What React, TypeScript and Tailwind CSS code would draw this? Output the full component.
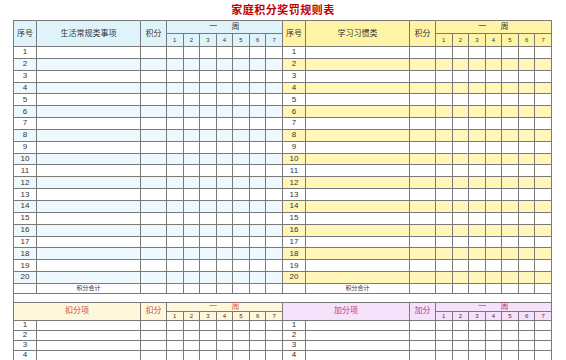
import React from 'react';

const days = [1, 2, 3, 4, 5, 6, 7];
const rows = Array.from({ length: 20 }, (_, i) => i + 1);
const bonusRows = [1, 2, 3, 4];

const cell = 'border border-[#7a7a7a] p-0 text-center align-middle leading-none';

function HalfCols() {
  return (
    <>
      <col className="w-[23px]" />
      <col className="w-[104px]" />
      <col className="w-[26px]" />
      {days.map((d) => (
        <col key={d} className="w-[16.57px]" />
      ))}
    </>
  );
}

export default function App() {
  return (
    <div
      className="w-[566px] h-[360px] overflow-hidden bg-white text-[#333]"
      style={{ fontFamily: '"Liberation Sans", "Noto Sans CJK SC", sans-serif' }}
    >
      {/* Title */}
      <div className="h-[20px] flex items-center justify-center">
        <h1 className="text-[11px] font-bold text-[#c00000] tracking-[0.5px] leading-none">家庭积分奖罚规则表</h1>
      </div>

      <table className="ml-[13px] w-[538px] table-fixed border-collapse">
        <colgroup>
          <HalfCols />
          <HalfCols />
        </colgroup>
        <tbody>
          {/* Top header */}
          <tr className="h-[13px]">
            <td rowSpan={2} className={`${cell} bg-[#dff4fa] text-[8px]`}>序号</td>
            <td rowSpan={2} className={`${cell} bg-[#dff4fa] text-[8px]`}>生活常规类事项</td>
            <td rowSpan={2} className={`${cell} bg-[#dff4fa] text-[8px]`}>积分</td>
            <td colSpan={7} className={`${cell} bg-[#dff4fa] text-[8px] tracking-[6px] pl-[6px]`}>一 周</td>
            <td rowSpan={2} className={`${cell} bg-[#fff3a6] text-[8px]`}>序号</td>
            <td rowSpan={2} className={`${cell} bg-[#fff3a6] text-[8px]`}>学习习惯类</td>
            <td rowSpan={2} className={`${cell} bg-[#fff3a6] text-[8px]`}>积分</td>
            <td colSpan={7} className={`${cell} bg-[#fff3a6] text-[8px] tracking-[6px] pl-[6px]`}>一 周</td>
          </tr>
          <tr className="h-[13px]">
            {days.map((d) => (
              <td key={`l${d}`} className={`${cell} bg-[#dff4fa] text-[6px]`}>{d}</td>
            ))}
            {days.map((d) => (
              <td key={`r${d}`} className={`${cell} bg-[#fff3a6] text-[6px]`}>{d}</td>
            ))}
          </tr>

          {/* 20 rows */}
          {rows.map((n) => {
            const even = n % 2 === 0;
            const l = even ? 'bg-[#eef9fd]' : 'bg-white';
            const r = even ? 'bg-[#fff6b8]' : 'bg-white';
            return (
              <tr key={n} className="h-[11.85px]">
                <td className={`${cell} ${l} text-[8px]`}>{n}</td>
                <td className={`${cell} ${l}`}></td>
                <td className={`${cell} ${l}`}></td>
                {days.map((d) => (
                  <td key={`l${d}`} className={`${cell} ${l}`}></td>
                ))}
                <td className={`${cell} ${r} text-[8px]`}>{n}</td>
                <td className={`${cell} ${r}`}></td>
                <td className={`${cell} ${r}`}></td>
                {days.map((d) => (
                  <td key={`r${d}`} className={`${cell} ${r}`}></td>
                ))}
              </tr>
            );
          })}

          {/* Totals */}
          <tr className="h-[10px]">
            <td className={cell}></td>
            <td className={`${cell} text-[6px]`}>积分合计</td>
            <td className={cell}></td>
            {days.map((d) => (
              <td key={`l${d}`} className={cell}></td>
            ))}
            <td className={cell}></td>
            <td className={`${cell} text-[6px]`}>积分合计</td>
            <td className={cell}></td>
            {days.map((d) => (
              <td key={`r${d}`} className={cell}></td>
            ))}
          </tr>
          <tr className="h-[9px]">
            <td colSpan={20} className={cell}></td>
          </tr>

          {/* Deduction / bonus header */}
          <tr className="h-[9px]">
            <td colSpan={2} rowSpan={2} className={`${cell} bg-[#fff7dc] text-[8px] text-[#c0504d]`}>扣分项</td>
            <td rowSpan={2} className={`${cell} bg-[#fff7dc] text-[8px] text-[#c0504d]`}>扣分</td>
            <td colSpan={7} className={`${cell} bg-[#fff7dc] text-[8px] text-[#d0603a] tracking-[6px] pl-[6px]`}>一 周</td>
            <td colSpan={2} rowSpan={2} className={`${cell} bg-[#f6e1fb] text-[8px] text-[#c0397a]`}>加分项</td>
            <td rowSpan={2} className={`${cell} bg-[#f6e1fb] text-[8px] text-[#c0397a]`}>加分</td>
            <td colSpan={7} className={`${cell} bg-[#f6e1fb] text-[8px] text-[#c0397a] tracking-[6px] pl-[6px]`}>一 周</td>
          </tr>
          <tr className="h-[9px]">
            {days.map((d) => (
              <td key={`l${d}`} className={`${cell} bg-[#fff7dc] text-[6px]`}>{d}</td>
            ))}
            {days.map((d) => (
              <td key={`r${d}`} className={`${cell} bg-[#f6e1fb] text-[6px]`}>{d}</td>
            ))}
          </tr>
          {bonusRows.map((n) => (
            <tr key={n} className="h-[10px]">
              <td className={`${cell} text-[8px]`}>{n}</td>
              <td className={cell}></td>
              <td className={cell}></td>
              {days.map((d) => (
                <td key={`l${d}`} className={cell}></td>
              ))}
              <td className={`${cell} text-[8px]`}>{n}</td>
              <td className={cell}></td>
              <td className={cell}></td>
              {days.map((d) => (
                <td key={`r${d}`} className={cell}></td>
              ))}
            </tr>
          ))}
        </tbody>
      </table>
    </div>
  );
}
